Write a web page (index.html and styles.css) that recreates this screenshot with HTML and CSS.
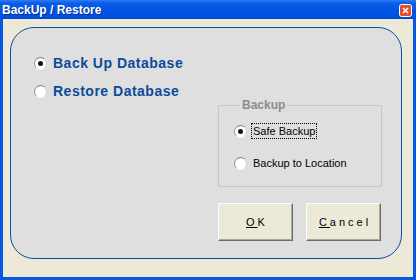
FILE: index.html
```html
<!DOCTYPE HTML>
<html>
    <head>
        <meta charset="UTF-8">
        <title>BackUp / Restore</title>
        <link rel="stylesheet" href="styles.css">
    </head>
    <body>
        <div class="janela">
            <div class="titulo">
                <span class="nome">BackUp / Restore</span>
                <span class="fechar">
                    <svg width="13" height="13" viewBox="0 0 13 13">
                        <rect x="0.5" y="0.5" width="12" height="12" rx="2" fill="#e0502e" stroke="#fff"/>
                        <path d="M4 4 L9 9 M9 4 L4 9" stroke="#fff" stroke-width="1.6"/>
                    </svg>
                </span>
            </div>
            <div class="cliente">
                <div class="painel">
                    <div class="opcoes">
                        <div class="opcao"><span class="radio marcado"></span>Back Up Database</div>
                        <div class="opcao"><span class="radio"></span>Restore Database</div>
                    </div>
                    <div class="lado">
                        <fieldset class="grupo">
                            <legend>Backup</legend>
                            <div class="item"><span class="radio marcado"></span><span class="foco">Safe Backup</span></div>
                            <div class="item"><span class="radio"></span><span class="sem-foco">Backup to Location</span></div>
                        </fieldset>
                        <div class="botoes">
                            <button class="botao"><u>O</u>K</button>
                            <button class="botao"><u>C</u>ancel</button>
                        </div>
                    </div>
                </div>
            </div>
        </div>
    </body>
</html>
```

FILE: styles.css
```css
body{
    margin: 0;
    background: #0054e3;
    font-family: "Liberation Sans", Arial, sans-serif;
}
.janela{
    width: 416px;
    height: 280px;
    background: #0756e4;
    display: flex;
    flex-direction: column;
}
.titulo{
    height: 19px;
    display: flex;
    align-items: center;
    justify-content: space-between;
    padding: 0 4px 0 2px;
    background: linear-gradient(#2f7cf5 0, #0a5fe8 3px, #0054e3 10px, #0150de 17px, #0248cf 19px);
}
.nome{
    color: #fff;
    font-weight: bold;
    font-size: 12px;
    text-shadow: 1px 1px 0 #0a2a8a;
}
.fechar{
    display: flex;
    margin-top: 1px;
}
.cliente{
    flex: 1;
    margin: 0 3px 3px;
    background: #ece9d8;
    padding: 8px 0 0 7px;
}
.painel{
    background: #dfdfdf;
    border: 1px solid #0a4fa0;
    border-radius: 24px;
    padding: 28px 0 0 23px;
    width: 367px;
    height: 202px;
}
.opcoes{
    margin-top: -7px;
}
.opcao{
    display: flex;
    align-items: center;
    height: 28px;
    color: #0b4c9a;
    font-weight: bold;
    font-size: 14px;
    letter-spacing: 0.5px;
}
.radio{
    width: 11px;
    height: 11px;
    border: 1px solid;
    border-color: #8a8780 #d8d6cc #f4f3ee #9d9a90;
    border-radius: 50%;
    background: radial-gradient(circle at 60% 60%, #fff 55%, #e6e4dc 100%);
    margin-right: 6px;
    position: relative;
    flex: none;
}
.radio.marcado::after{
    content: "";
    position: absolute;
    left: 3px;
    top: 3px;
    width: 5px;
    height: 5px;
    border-radius: 50%;
    background: #111;
}
.lado{
    margin: -7px 0 0 184px;
    width: 164px;
}
.grupo{
    margin: 0;
    padding: 10px 0 0 15px;
    height: 89px;
    box-sizing: border-box;
    border: 1px solid #c8c6ba;
    border-radius: 2px;
}
.grupo legend{
    padding: 0 2px;
    margin-left: 6px;
    color: #8c8c8c;
    font-weight: bold;
    font-size: 12px;
}
.item{
    display: flex;
    align-items: center;
    height: 18px;
    margin-bottom: 14px;
    font-size: 11px;
    color: #000;
}
.item .radio{
    margin-right: 4px;
}
.foco{
    border: 1px dotted #000;
    padding: 1px;
}
.sem-foco{
    padding: 2px;
}
.botoes{
    display: flex;
    gap: 13px;
    margin-top: 16px;
}
.botao{
    width: 75px;
    height: 38px;
    background: #ece9d8;
    border: 1px solid;
    border-color: #fff #716f64 #716f64 #fff;
    box-shadow: inset -1px -1px 0 #aca899;
    font-family: "Liberation Sans", Arial, sans-serif;
    font-size: 11px;
    letter-spacing: 3px;
    padding: 0 0 0 3px;
    color: #000;
}
```
